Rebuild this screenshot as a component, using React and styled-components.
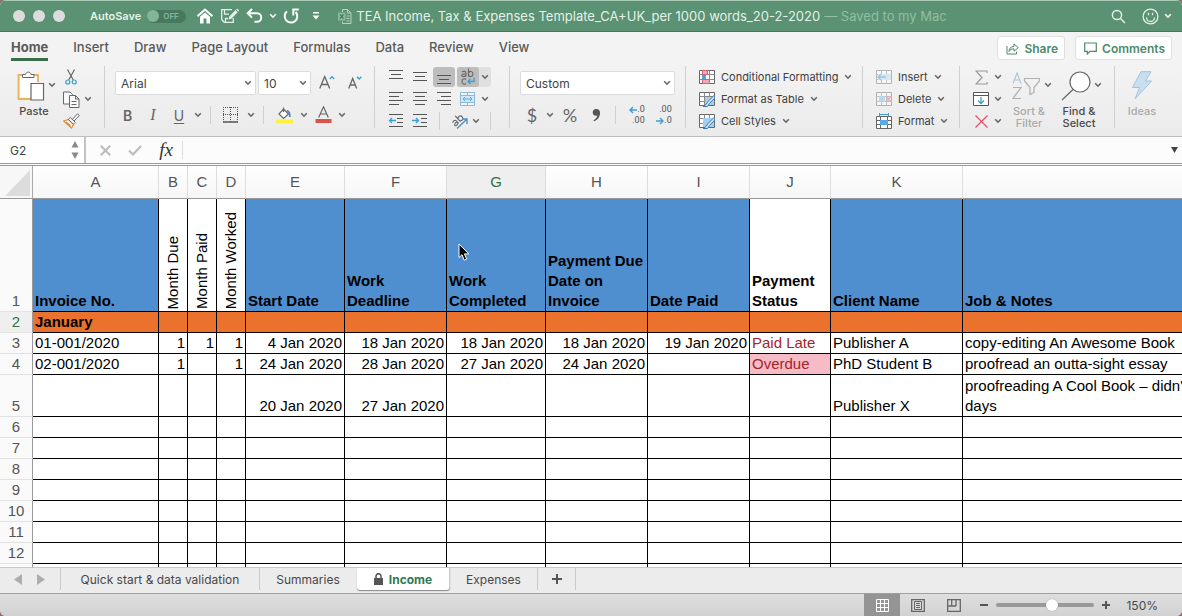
import styled, { createGlobalStyle, css } from "styled-components"

const GlobalStyle = createGlobalStyle`
*{box-sizing:border-box;}
body{
margin:0;
background-color:#8d6f70;
font-family:Inter,Roboto,"Liberation Sans",sans-serif;
color:#4a4a4a;
}
button,input,select{
font:inherit;
color:inherit;
margin:0;
}
svg{display:block;flex:none;}
`;

const menuTabs = ["Home", "Insert", "Draw", "Page Layout", "Formulas", "Data", "Review", "View"];

const columns = [
    {id:"A", width:126},
    {id:"B", width:29},
    {id:"C", width:29},
    {id:"D", width:29},
    {id:"E", width:99},
    {id:"F", width:102},
    {id:"G", width:99, active:true},
    {id:"H", width:102},
    {id:"I", width:102},
    {id:"J", width:81},
    {id:"K", width:132},
    {id:""},
];

const headings = [
    {text:"Invoice No."},
    {text:"Month Due", vertical:true},
    {text:"Month Paid", vertical:true},
    {text:"Month Worked", vertical:true},
    {text:"Start Date"},
    {text:"Work Deadline"},
    {text:"Work Completed"},
    {text:"Payment Due Date on Invoice"},
    {text:"Date Paid"},
    {text:"Payment Status", plain:true},
    {text:"Client Name"},
    {text:"Job & Notes"},
];

const invoices = [
    ["01-001/2020", "1", "1", "1", "4 Jan 2020", "18 Jan 2020", "18 Jan 2020", "18 Jan 2020", "19 Jan 2020", "Paid Late", "Publisher A", "copy-editing An Awesome Book"],
    ["02-001/2020", "1", "", "1", "24 Jan 2020", "28 Jan 2020", "27 Jan 2020", "24 Jan 2020", "", "Overdue", "PhD Student B", "proofread an outta-sight essay"],
    ["", "", "", "", "20 Jan 2020", "27 Jan 2020", "", "", "", "", "Publisher X", "proofreading A Cool Book – didn't\ndays"],
];

const emptyRows = ["6", "7", "8", "9", "10", "11", "12", ""];

function Chevron({color = "#666"}) {
    return (
        <svg width="8" height="6" viewBox="0 0 8 6" fill="none" stroke={color} strokeWidth="1.6">
            <path d="M1.2 1.2 4 4.2 6.8 1.2" />
        </svg>
    )
}

function Lines({rows}) {
    return (
        <svg width="16" height="14" viewBox="0 0 16 14" stroke="#555" strokeWidth="1">
            {rows.map(([x1, x2, y]) => <path key={y} d={`M${x1} ${y}.5H${x2}`} />)}
        </svg>
    )
}

function Indent({out}) {
    return (
        <svg width="16" height="14" viewBox="0 0 16 14" fill="none" stroke="#555">
            <path d="M1 .5H15M9 4.5H15M9 8.5H15M1 12.5H15" />
            <path stroke="#3b9fd6" strokeWidth="1.3" d={out ? "M8 6.5H1.5M4 4 1.5 6.5 4 9" : "M0 6.5H6.5M4 4 6.5 6.5 4 9"} />
        </svg>
    )
}

function TitleBar() {
    return (
        <Title>
            <Lights><Light /><Light /><Light /></Lights>
            <AutoSave>
                AutoSave
                <input type="checkbox" />
                <Toggle><i />OFF</Toggle>
            </AutoSave>
            <QuickTools>
                <BarButton aria-label="Home">
                    <svg width="18" height="16" viewBox="0 0 18 16" fill="none" stroke="#fff">
                        <path strokeWidth="2" d="M1.5 8.2 9 1.6 16.5 8.2" />
                        <path fill="#fff" stroke="none" d="M4 8.7 9 4.4l5 4.3V15.5h-3.5V10.5h-3V15.5H4z" />
                    </svg>
                </BarButton>
                <BarButton aria-label="Save">
                    <svg width="20" height="16" viewBox="0 0 20 16" fill="none" stroke="#e3f1e8" strokeWidth="1.3">
                        <path d="M12 1.7H1.7V11.5L4.2 14.3H13.3V10M4.5 1.7V6.2H9M5.5 14V10.5H8" />
                        <path fill="#e3f1e8" stroke="none" d="M8.5 11.5 9.3 8.6 15.5 2.1 17.7 4.2 11.4 10.7zM16.2 1.4 17.1.6 19.2 2.6 18.4 3.5z" />
                    </svg>
                </BarButton>
                <BarButton aria-label="Undo">
                    <svg width="17" height="16" viewBox="0 0 17 16" fill="none" stroke="#fff" strokeWidth="2">
                        <path d="M6 1 1.7 5.3 6 9.6M1.7 5.3H11a4.2 4.2 0 0 1 0 8.5H8.5" />
                    </svg>
                </BarButton>
                <Chevron color="#fff" />
                <BarButton aria-label="Redo">
                    <svg width="17" height="17" viewBox="0 0 17 17" fill="none" stroke="#fff" strokeWidth="2">
                        <path d="M4 3.4A6.3 6.3 0 1 0 12.6 4M15.8 1.6H10.3V7.5" />
                    </svg>
                </BarButton>
                <BarButton aria-label="Customize toolbar">
                    <svg width="8" height="9" viewBox="0 0 8 9" fill="#fff"><path d="M1 0H7V1.5H1zM.5 3.5H7.5L4 7.5z" /></svg>
                </BarButton>
            </QuickTools>
            <FileName>
                <svg width="14" height="15" viewBox="0 0 14 15" fill="none" stroke="#b6d4c2">
                    <path d="M4.500 3V.5H9.5L13 4V14.5H4.5V12.5M9.5.5V4H13M8.5 7H11.5M8.5 9.5H11.5M8.5 12H11.5" />
                    <path fill="#8bb89d" stroke="none" d="M0 3.5H7.5V11.5H0z" />
                    <path stroke="#417d5a" strokeWidth="1.3" d="M2 5.3 5.5 9.7M5.5 5.3 2 9.7" />
                </svg>
                <h1>TEA Income, Tax &amp; Expenses Template_CA+UK_per 1000 words_20-2-2020</h1>
                <span>— Saved to my Mac</span>
            </FileName>
            <TitleEnd>
                <BarButton aria-label="Search">
                    <svg width="15" height="15" viewBox="0 0 15 15" fill="none" stroke="#e3f1e8" strokeWidth="1.5">
                        <circle cx="6" cy="6" r="4.6" /><path d="M9.5 9.5 14 14" />
                    </svg>
                </BarButton>
                <BarButton aria-label="Feedback">
                    <svg width="17" height="17" viewBox="0 0 17 17" fill="none" stroke="#e3f1e8" strokeWidth="1.3">
                        <circle cx="8.5" cy="8.5" r="7.4" />
                        <path d="M4.500 9.5a4 4 0 0 0 8 0M6.5 4.7V7.3M10.5 4.7V7.3" />
                    </svg>
                    <Chevron color="#fff" />
                </BarButton>
            </TitleEnd>
        </Title>
    )
}

function MenuBar() {
    return (
        <Menu>
            <MenuTabs>
                {menuTabs.map(tab => <MenuTab key={tab} $active={tab === "Home"}>{tab}</MenuTab>)}
            </MenuTabs>
            <ActionButton>
                <svg width="13" height="13" viewBox="0 0 13 13" fill="none" stroke="#4b8b67">
                    <path d="M1 4V12H10.5V9.5M3 9.5C3.2 6 5 4.5 8 4.5V2L12.3 5.7 8 9.2V6.8C5.5 6.8 4.2 7.5 3 9.5z" />
                </svg>
                Share
            </ActionButton>
            <ActionButton>
                <svg width="13" height="13" viewBox="0 0 13 13" fill="none" stroke="#4b8b67" strokeWidth="1.2">
                    <path d="M.7 1H12.3V9.3H6L3.3 12V9.3H.7z" />
                </svg>
                Comments
            </ActionButton>
        </Menu>
    )
}

function ClipboardGroup() {
    return (
        <Group $width={104} $pad={12}>
            <BigButton $width={44}>
                <BigIcon>
                    <svg width="28" height="30" viewBox="0 0 28 30" fill="none" stroke="#666">
                        <path stroke="#e9b35c" strokeWidth="1.8" d="M5 4H1.5V28H14M17 4H21V11" />
                        <path fill="#fff" stroke="none" d="M3 5.5H19.5V12H13.5V26.5H3z" />
                        <path fill="#fff" d="M5.5 6.5V3.5H8.5C9 .3 13.5.3 14 3.5H17V6.5z" />
                        <path fill="#fff" strokeWidth="1.2" d="M14 12.5H26.5V29H14z" />
                    </svg>
                </BigIcon>
                Paste
            </BigButton>
            <BigChevron aria-label="Paste options" $pull={-12}><Chevron /></BigChevron>
            <Stack>
                <Tools>
                    <Tool aria-label="Cut">
                        <svg width="12" height="16" viewBox="0 0 12 16" fill="none" stroke="#666" strokeWidth="1.2">
                            <path d="M2.5.5 8.3 11M9.5.5 3.7 11" />
                            <g stroke="#3f9cc9"><circle cx="2.8" cy="13" r="2" /><circle cx="9.2" cy="13" r="2" /></g>
                        </svg>
                    </Tool>
                </Tools>
                <Tools>
                    <Tool aria-label="Copy">
                        <svg width="17" height="17" viewBox="0 0 17 17" fill="#fafafa" stroke="#666">
                            <path d="M.5 1H7L9.5 3.5V13H.5z" />
                            <path d="M6.5 4.5H12.5L16 8V16.5H6.5zM12.5 4.5V8H16M8.5 10.5H13.5M8.5 13.5H13.5" />
                        </svg>
                    </Tool>
                    <Arrow aria-label="Copy options"><Chevron /></Arrow>
                </Tools>
                <Tools>
                    <Tool aria-label="Format painter">
                        <svg width="17" height="16" viewBox="0 0 17 16" fill="#fff" stroke="#666">
                            <path stroke="#e08c3d" strokeWidth="1.2" d="M.7 8 5.5 6.5 10.5 11.5 8.5 15zM3 9 7.5 12.5" />
                            <path d="M5.3 6.3 7.2 4.5 12.3 9.3 10.5 11.2zM9.5 6.3 14.5.8 16.3 2.5 11 8z" />
                        </svg>
                    </Tool>
                </Tools>
            </Stack>
        </Group>
    )
}

function FontGroup() {
    return (
        <Group $width={269} $pad={10}>
            <TwoRows>
                <Tools $gap={2}>
                    <Picker $width={141}>
                        <select aria-label="Font"><option>Arial</option></select><Chevron />
                    </Picker>
                    <Picker $width={53}>
                        <select aria-label="Font size"><option>10</option></select><Chevron />
                    </Picker>
                    <Tool aria-label="Increase font size" $width={28}>
                        <svg width="16" height="16" viewBox="0 0 16 16" fill="none" stroke="#666" strokeWidth="1.3">
                            <path d="M.7 13.5 5.7 1.5 10.7 13.5M2.5 9.5H9" />
                            <path stroke="#3b9fc9" d="M10.8 4 13 1.7 15.2 4" />
                        </svg>
                    </Tool>
                    <Tool aria-label="Decrease font size" $width={24}>
                        <svg width="14" height="16" viewBox="0 0 14 16" fill="none" stroke="#666" strokeWidth="1.3">
                            <path d="M.7 13.5 4.7 3.5 8.700 13.5M2 10H7.5" />
                            <path stroke="#3b9fc9" d="M9 1.700 11.2 4 13.4 1.7" />
                        </svg>
                    </Tool>
                </Tools>
                <Tools>
                    <Letter $width={25} aria-label="Bold"><b>B</b></Letter>
                    <Letter $width={26} aria-label="Italic"><em>I</em></Letter>
                    <Letter $width={26} aria-label="Underline"><u>U</u></Letter>
                    <Arrow aria-label="Underline options"><Chevron /></Arrow>
                    <Divider $margin={6} />
                    <Tool aria-label="Borders" $width={28}>
                        <svg width="16" height="16" viewBox="0 0 16 16" stroke="#555">
                            <path strokeDasharray="1 1" d="M0 .5H15M.5 0V15M14.5 0V15M7.5 0V15M0 7.5H15" />
                            <path strokeWidth="1.5" d="M0 15H15" />
                        </svg>
                    </Tool>
                    <Arrow aria-label="Border options"><Chevron /></Arrow>
                    <Divider $margin={6} />
                    <Tool aria-label="Fill color" $width={28}>
                        <svg width="17" height="18" viewBox="0 0 17 18" fill="none" stroke="#666" strokeWidth="1.2">
                            <path fill="#fff" d="M7.5 3 12.5 8 7.5 12.5 3 8zM7.5 6V1.5" />
                            <path stroke="#4f83b8" strokeWidth="1.7" d="M11 4.5C14 5.5 14 8 13.8 11" />
                            <path stroke="#fdf13c" strokeWidth="4" d="M0 15.5H17" />
                        </svg>
                    </Tool>
                    <Arrow aria-label="Fill options"><Chevron /></Arrow>
                    <Tool aria-label="Font color" $width={26}>
                        <svg width="17" height="18" viewBox="0 0 17 18" fill="none" stroke="#666" strokeWidth="1.2">
                            <path d="M3.7 11.5 8.5.8 13.3 11.5M5.3 8H11.7" />
                            <path stroke="#d9534a" strokeWidth="4" d="M.5 15H16.5" />
                        </svg>
                    </Tool>
                    <Arrow aria-label="Font color options"><Chevron /></Arrow>
                </Tools>
            </TwoRows>
        </Group>
    )
}

function AlignGroup() {
    return (
        <Group $width={134} $pad={10}>
            <Stack>
                <Tools $gap={2}>
                    <Tool aria-label="Align top"><Lines rows={[[1, 15, 0], [3, 13, 4], [1, 15, 8]]} /></Tool>
                    <Tool aria-label="Align middle"><Lines rows={[[1, 15, 2], [3, 13, 6], [1, 15, 10]]} /></Tool>
                    <Tool aria-label="Align bottom" $on><Lines rows={[[1, 15, 5], [3, 13, 9], [1, 15, 13]]} /></Tool>
                    <Split>
                        <Tool aria-label="Wrap text" $on>
                            <svg width="16" height="18" viewBox="0 0 16 18" fill="none" stroke="#666" strokeWidth="1.1">
                                <path d="M2 4C3 3 6 3 6 5V8.5M6 6C1 5.5 1 8.5 3 8.5 4.5 8.5 6 8 6 7M8.5.5V8.5M8.5 5C9.5 2.5 13 3 13 6 13 9 9.5 9.5 8.5 7M6 11.5C4.5 10 2 11 2 13.5 2 16 4.5 17 6 15.5" />
                                <path stroke="#3b9fd6" strokeWidth="1.4" d="M14 9.5V13.5H8M10.5 11 8 13.5 10.5 16" />
                            </svg>
                        </Tool>
                        <Arrow aria-label="Wrap options"><Chevron /></Arrow>
                    </Split>
                </Tools>
                <Tools $gap={2}>
                    <Tool aria-label="Align left"><Lines rows={[[1, 15, 0], [1, 11, 4], [1, 15, 8], [1, 11, 12]]} /></Tool>
                    <Tool aria-label="Align center"><Lines rows={[[1, 15, 0], [3, 13, 4], [1, 15, 8], [3, 13, 12]]} /></Tool>
                    <Tool aria-label="Align right"><Lines rows={[[1, 15, 0], [5, 15, 4], [1, 15, 8], [5, 15, 12]]} /></Tool>
                    <Tools>
                        <Tool aria-label="Merge cells">
                            <svg width="16" height="16" viewBox="0 0 16 16" fill="none" stroke="#8bb9d6">
                                <path fill="#eef6fb" d="M.5 1.5H14.5V14.5H.5zM7.5 1.5V4.5M7.5 11.5V14.5" />
                                <path fill="#d3e8f6" d="M.5 4.5H14.5V11.5H.5z" />
                                <path stroke="#5aa6d6" d="M3 8H12M5 6 3 8 5 10M10 6 12 8 10 10" />
                            </svg>
                        </Tool>
                        <Arrow aria-label="Merge options"><Chevron /></Arrow>
                    </Tools>
                </Tools>
                <Tools $gap={2}>
                    <Tool aria-label="Decrease indent"><Indent out /></Tool>
                    <Tool aria-label="Increase indent"><Indent /></Tool>
                    <Divider $margin={6} />
                    <Tools>
                        <Tool aria-label="Orientation">
                            <svg width="18" height="16" viewBox="0 0 18 16" fill="none" stroke="#666" strokeWidth="1.1">
                                <g transform="translate(2 9) rotate(-42)">
                                    <path d="M0 1C1 0 4 0 4 2V5.5M4 3C-1 2.5-1 5.5 1 5.5 2.5 5.5 4 5 4 4M6.5-2.5V5.5M6.5 2C7.5-.5 11 0 11 3 11 6 7.5 6 6.5 4" />
                                </g>
                                <path stroke="#4f8fc0" strokeWidth="1.4" d="M7 15.5 16.5 6.5M12 6H17V11" />
                            </svg>
                        </Tool>
                        <Arrow aria-label="Orientation options"><Chevron /></Arrow>
                    </Tools>
                    <Divider $margin={6} />
                </Tools>
            </Stack>
        </Group>
    )
}

function NumberGroup() {
    return (
        <Group $width={175} $pad={10}>
            <TwoRows>
                <Tools>
                    <Picker $width={155}>
                        <select aria-label="Number format"><option>Custom</option></select><Chevron />
                    </Picker>
                </Tools>
                <Tools>
                    <Letter $width={24} $size={18} aria-label="Currency">$</Letter>
                    <Arrow aria-label="Currency options"><Chevron /></Arrow>
                    <Letter $width={28} $size={18} aria-label="Percent">%</Letter>
                    <Tool aria-label="Comma style" $width={24}>
                        <svg width="9" height="14" viewBox="0 0 9 14" fill="#555">
                            <path d="M4 1A3.5 3.5 0 0 1 8 5C8 9 5.5 12 2 13.2L1.5 12.3C4 11 5.2 9.5 5.3 7.6 3 8.5.7 7 .7 4.5.7 2.5 2.2 1 4 1z" />
                        </svg>
                    </Tool>
                    <Divider $margin={7} />
                    <Tool aria-label="Increase decimal" $width={28}>
                        <Decimal>
                            <span><svg width="8" height="8" viewBox="0 0 8 8" fill="none" stroke="#3b9fd6" strokeWidth="1.4"><path d="M8 4H1M4 1 1 4 4 7" /></svg>.0</span>
                            <span>.00</span>
                        </Decimal>
                    </Tool>
                    <Tool aria-label="Decrease decimal" $width={26}>
                        <Decimal>
                            <span>.00</span>
                            <span><svg width="8" height="8" viewBox="0 0 8 8" fill="none" stroke="#3b9fd6" strokeWidth="1.4"><path d="M0 4H7M4 1 7 4 4 7" /></svg>.0</span>
                        </Decimal>
                    </Tool>
                </Tools>
            </TwoRows>
        </Group>
    )
}

function GridBase({children, faded}) {
    return (
        <svg width="16" height="16" viewBox="0 0 16 16" fill="none" stroke="#666" opacity={faded ? 0.45 : 1}>
            <path fill="#fff" d="M.5 1.5H15.5V14.5H.5z" />
            <path stroke="#888" d="M5.5 1.5V14.5M10.5 1.5V14.5M.5 5.5H15.5M.5 10.5H15.5" />
            {children}
        </svg>
    )
}

function StylesGroup() {
    return (
        <Group $width={176} $pad={13}>
            <Stack>
                <TextTool>
                    <GridBase>
                        <path stroke="#d9607a" fill="#f3a5b3" d="M3.5 1.5H8.5V5.5H3.5zM3.5 10.5H10.5V14.5H3.5z" />
                        <path stroke="none" fill="#4fa3d8" d="M3 6H7V10H3z" />
                    </GridBase>
                    Conditional Formatting <Chevron />
                </TextTool>
                <TextTool>
                    <GridBase>
                        <path stroke="none" fill="#a3d0f2" d="M6 6H15V14H6z" />
                        <path stroke="#3f7bb0" fill="#cfe4f5" d="M15.5 4 9 10.5 7 13.5 4 15.5H8.5L10.5 12.5 15.8 7z" />
                    </GridBase>
                    Format as Table <Chevron />
                </TextTool>
                <TextTool>
                    <GridBase>
                        <path stroke="none" fill="#a3d0f2" d="M4 5H15V14H4z" />
                        <path stroke="#3f7bb0" fill="#cfe4f5" d="M15.5 4 9 10.5 7 13.5 4 15.5H8.5L10.5 12.5 15.8 7z" />
                    </GridBase>
                    Cell Styles <Chevron />
                </TextTool>
            </Stack>
        </Group>
    )
}

function CellsGroup() {
    return (
        <Group $width={96} $pad={13}>
            <Stack>
                <TextTool>
                    <GridBase faded>
                        <path stroke="none" fill="#b9dcf4" d="M2 5H15V11H2z" />
                        <path stroke="#2f8fd0" strokeWidth="1.4" d="M10 8H2M5 5 2 8 5 11" />
                    </GridBase>
                    Insert <Chevron />
                </TextTool>
                <TextTool>
                    <GridBase faded>
                        <path stroke="none" fill="#79bde8" d="M3 5H9V11H3z" />
                        <path stroke="#e0607a" strokeWidth="1.5" d="M10 5 15 11M15 5 10 11" />
                    </GridBase>
                    Delete <Chevron />
                </TextTool>
                <TextTool>
                    <svg width="16" height="17" viewBox="0 0 16 17" fill="none" stroke="#666">
                        <path fill="#fff" d="M.5 3.5H15.5V15.5H.5zM4.5 3.5V15.5M11.5 3.5V15.5M.5 7.5H15.5M.5 11.5H15.5" />
                        <path stroke="none" fill="#58abe6" d="M4 7H12V12H4z" />
                        <path stroke="#3b9fd6" d="M3.5 0V3M12.5 0V3M3.5 1.5H12.5" />
                    </svg>
                    Format <Chevron />
                </TextTool>
            </Stack>
        </Group>
    )
}

function EditingGroup() {
    return (
        <Group $width={154} $pad={10}>
            <Stack>
                <Tools>
                    <Tool aria-label="AutoSum">
                        <svg width="13" height="15" viewBox="0 0 13 15" fill="none" stroke="#999" strokeWidth="1.2">
                            <path d="M12 3V1H1L7 7.5 1 14H12V12" />
                        </svg>
                    </Tool>
                    <Arrow aria-label="AutoSum options"><Chevron /></Arrow>
                </Tools>
                <Tools>
                    <Tool aria-label="Fill">
                        <svg width="16" height="14" viewBox="0 0 16 14" fill="#fff" stroke="#555">
                            <path d="M.5.5H15.5V13.5H.5zM.5 3.5H15.5" />
                            <path fill="none" stroke="#3b9fd6" strokeWidth="1.3" d="M8 5V11.5M5 8.5 8 11.5 11 8.5" />
                        </svg>
                    </Tool>
                    <Arrow aria-label="Fill series options"><Chevron /></Arrow>
                </Tools>
                <Tools>
                    <Tool aria-label="Clear">
                        <svg width="13" height="13" viewBox="0 0 13 13" stroke="#e0506c" strokeWidth="1.2">
                            <path d="M.5.5 12.5 12.5M12.5.5.5 12.5" />
                        </svg>
                    </Tool>
                    <Arrow aria-label="Clear options"><Chevron /></Arrow>
                </Tools>
            </Stack>
            <BigButton $width={50} $muted>
                <BigIcon>
                    <svg width="28" height="28" viewBox="0 0 28 28" fill="none" strokeWidth="1.2">
                        <path stroke="#a9c8dd" d="M1 11.5 5 1 9 11.5M2.5 8H7.5" />
                        <path stroke="#b0b0b0" d="M1 15.5H9L1 26.5H9M12.5 6.5H27.5V9L22 15.5V20.5L18 22.5V15.5L12.5 9z" />
                    </svg>
                </BigIcon>
                Sort &amp;<br />Filter
            </BigButton>
            <BigChevron aria-label="Sort options" $pull={-14}><Chevron /></BigChevron>
            <BigButton $width={50} $pull={-2}>
                <BigIcon>
                    <svg width="30" height="30" viewBox="0 0 30 30" fill="none" stroke="#666" strokeWidth="1.2">
                        <circle cx="19" cy="11" r="10" fill="#fff" /><path d="M12 18.5 1 29" />
                    </svg>
                </BigIcon>
                Find &amp;<br />Select
            </BigButton>
            <BigChevron aria-label="Find options" $pull={-14}><Chevron /></BigChevron>
        </Group>
    )
}

function Ribbon() {
    return (
        <RibbonBar>
            <ClipboardGroup />
            <GroupLine />
            <FontGroup />
            <GroupLine />
            <AlignGroup />
            <GroupLine />
            <NumberGroup />
            <GroupLine />
            <StylesGroup />
            <GroupLine />
            <CellsGroup />
            <GroupLine />
            <EditingGroup />
            <GroupLine />
            <BigButton $width={54} $muted>
                <BigIcon $center>
                    <svg width="22" height="29" viewBox="0 0 22 29" fill="#c9dff0" stroke="#a3c3dd">
                        <path d="M10 .7H20L14.5 10H20.5L4 28 8.5 16.5H1.5z" />
                    </svg>
                </BigIcon>
                Ideas
            </BigButton>
        </RibbonBar>
    )
}

function FormulaBar() {
    return (
        <Formula>
            <NameBox>
                <input aria-label="Name box" defaultValue="G2" />
                <svg width="8" height="18" viewBox="0 0 8 18" fill="#8a8a8a"><path d="M4 0 7.5 6.5H.5zM4 18 .5 11.5H7.5z" /></svg>
            </NameBox>
            <FormulaTools>
                <Tool aria-label="Cancel">
                    <svg width="11" height="11" viewBox="0 0 11 11" stroke="#bbb" strokeWidth="2"><path d="M.8.8 10.2 10.2M10.2.8.8 10.2" /></svg>
                </Tool>
                <Tool aria-label="Enter">
                    <svg width="14" height="11" viewBox="0 0 14 11" fill="none" stroke="#bbb" strokeWidth="2"><path d="M1 5.5 5 9.5 13 1" /></svg>
                </Tool>
                <Fx aria-label="Insert function">fx</Fx>
            </FormulaTools>
            <FormulaInput aria-label="Formula" />
            <Tool aria-label="Expand formula bar" $width={16}>
                <svg width="7" height="6" viewBox="0 0 7 6" fill="#444"><path d="M0 0H7L3.5 6z" /></svg>
            </Tool>
        </Formula>
    )
}

function cellKind(row, col) {
    if (col > 0 && col < 9) return "right";
    if (col === 9) return row === 1 ? "overdue" : "late";
    return "left";
}

function Sheet() {
    return (
        <SheetArea>
            <Grid>
                <colgroup>
                    <col style={{width: 33}} />
                    {columns.map(c => <col key={c.id} style={{width: c.width}} />)}
                </colgroup>
                <thead>
                    <tr>
                        <Corner aria-label="Select all">
                            <svg width="25" height="26" viewBox="0 0 25 26" fill="#dcdcdc"><path d="M25 0V26H0z" /></svg>
                        </Corner>
                        {columns.map(c => <ColHead key={c.id} scope="col" $active={c.active}>{c.id}</ColHead>)}
                    </tr>
                </thead>
                <tbody>
                    <Row $height={113}>
                        <RowHead scope="row">1</RowHead>
                        {headings.map(h => (
                            <HeadCell key={h.text} $plain={h.plain || h.vertical} $vertical={h.vertical}>
                                {h.vertical ? <Upright>{h.text}</Upright> : h.text}
                            </HeadCell>
                        ))}
                    </Row>
                    <Row $height={21}>
                        <RowHead scope="row" $active>2</RowHead>
                        {columns.map((c, i) => <MonthCell key={c.id}>{i === 0 ? "January" : null}</MonthCell>)}
                    </Row>
                    {invoices.map((invoice, r) => (
                        <Row key={r} $height={r === 2 ? 42 : 21}>
                            <RowHead scope="row">{r + 3}</RowHead>
                            {invoice.map((text, i) => <Cell key={i} $kind={text ? cellKind(r, i) : "left"}>{text}</Cell>)}
                        </Row>
                    ))}
                    {emptyRows.map(n => (
                        <Row key={n} $height={21}>
                            <RowHead scope="row">{n}</RowHead>
                            {columns.map(c => <Cell key={c.id} />)}
                        </Row>
                    ))}
                </tbody>
            </Grid>
            <Pointer width="12" height="19" viewBox="0 0 12 19">
                <path fill="#000" stroke="#fff" d="M1 1V14.5L4 11.7 6.2 17.2 8.7 16.1 6.4 10.9H10.8z" />
            </Pointer>
        </SheetArea>
    )
}

function SheetTabs() {
    return (
        <TabStrip>
            <TabNav>
                <Tool aria-label="Previous sheet"><svg width="8" height="11" viewBox="0 0 8 11" fill="#adadad"><path d="M8 0V11L0 5.5z" /></svg></Tool>
                <Tool aria-label="Next sheet"><svg width="8" height="11" viewBox="0 0 8 11" fill="#adadad"><path d="M0 0V11L8 5.5z" /></svg></Tool>
            </TabNav>
            <SheetTab $width={199}>Quick start &amp; data validation</SheetTab>
            <SheetTab $width={97} $noline>Summaries</SheetTab>
            <SheetTab $width={93} $active>
                <svg width="9" height="12" viewBox="0 0 9 12" fill="#555">
                    <path d="M0 5H9V12H0z" /><path fill="none" stroke="#555" strokeWidth="1.5" d="M2 5V3.2a2.5 2.5 0 0 1 5 0V5" />
                </svg>
                Income
            </SheetTab>
            <SheetTab $width={88}>Expenses</SheetTab>
            <SheetTab $width={38} aria-label="New sheet">
                <svg width="10" height="10" viewBox="0 0 10 10" stroke="#555" strokeWidth="2"><path d="M5 0V10M0 5H10" /></svg>
            </SheetTab>
        </TabStrip>
    )
}

function StatusBar() {
    return (
        <Status>
            <ViewButton aria-label="Normal view" $active>
                <svg width="13" height="13" viewBox="0 0 13 13" fill="none" stroke="#fff">
                    <path d="M.5.5H12.5V12.5H.5zM4.5 0V13M8.5 0V13M0 4.5H13M0 8.5H13" />
                </svg>
            </ViewButton>
            <ViewButton aria-label="Page layout view">
                <svg width="14" height="13" viewBox="0 0 14 13" fill="none" stroke="#666">
                    <path strokeWidth="1.3" d="M.7.7H13.3V12.3H.7z" /><path d="M3.5 2.5H10.5V10.5H3.5zM5 4.5H9M5 6.5H9M5 8.5H9" />
                </svg>
            </ViewButton>
            <ViewButton aria-label="Page break view">
                <svg width="14" height="13" viewBox="0 0 14 13" fill="none" stroke="#666" strokeWidth="1.3">
                    <path d="M.7.7H13.3V12.3H.7zM4.7.7V7M9 .7V7M.7 7H9" />
                </svg>
            </ViewButton>
            <Zoom>
                <ZoomButton aria-label="Zoom out"><svg width="8" height="2" viewBox="0 0 8 2" fill="#555"><path d="M0 0H8V2H0z" /></svg></ZoomButton>
                <Slider type="range" aria-label="Zoom" min="0" max="100" defaultValue="58" />
                <ZoomButton aria-label="Zoom in"><svg width="8" height="8" viewBox="0 0 8 8" stroke="#555" strokeWidth="2"><path d="M4 0V8M0 4H8" /></svg></ZoomButton>
                <ZoomValue>150%</ZoomValue>
            </Zoom>
        </Status>
    )
}

function App() {
    return (
        <Window>
            <GlobalStyle />
            <TitleBar />
            <MenuBar />
            <Ribbon />
            <FormulaBar />
            <Sheet />
            <SheetTabs />
            <StatusBar />
        </Window>
    )
}

export default App

const Window=styled.div`
display:flex;
flex-direction:column;
height:100vh;
border-radius:6px;
overflow:hidden;
background-color:#f3f3f3;
`;
const bare=css`
display:flex;
align-items:center;
justify-content:center;
flex:none;
padding:0;
border:0;
background:none;
`;

const Title=styled.header`
display:flex;
align-items:center;
flex:none;
height:32px;
padding:0 10px 0 13px;
background-color:#5a9273;
border-top:1px solid #a9cbb6;
border-bottom:1px solid #3f7b59;
color:#e3f1e8;
`;
const Lights=styled.div`
display:flex;
gap:8px;
`;
const Light=styled.span`
width:12px;
height:12px;
border-radius:50%;
background-color:#dcdcdc;
`;
const AutoSave=styled.label`
display:flex;
align-items:center;
gap:6px;
position:relative;
margin-left:25px;
font-size:11px;
font-weight:600;
input{
position:absolute;
right:0;
width:39px;
height:13px;
opacity:0;
}
`;
const Toggle=styled.span`
display:flex;
align-items:center;
gap:4px;
width:39px;
height:13px;
border-radius:7px;
background-color:#48795e;
color:#86b398;
font-size:8px;
i{
width:12px;
height:12px;
border-radius:50%;
background-color:#83b696;
}
`;
const QuickTools=styled.div`
display:flex;
align-items:center;
gap:6px;
margin-left:10px;
`;
const BarButton=styled.button`
${bare}
gap:5px;
height:20px;
&:nth-child(6){margin-left:6px;}
`;
const FileName=styled.div`
display:flex;
align-items:center;
flex:1;
min-width:0;
gap:4px;
margin-left:18px;
font-size:13px;
white-space:nowrap;
h1{
margin:0;
font-size:13px;
font-weight:400;
}
span{color:#94bfa5;}
`;
const TitleEnd=styled.div`
display:flex;
gap:16px;
`;

const Menu=styled.nav`
display:flex;
align-items:center;
flex:none;
gap:10px;
height:32px;
padding:0 10px 0 11px;
`;
const MenuTabs=styled.div`
display:flex;
flex:1;
gap:25px;
`;
const MenuTab=styled.button`
${bare}
height:26px;
font-size:13px;
font-weight:${p => p.$active ? 700 : 500};
color:#5a5a5a;
border-bottom:3px solid ${p => p.$active ? "#3a6e4c" : "transparent"};
`;
const ActionButton=styled.button`
${bare}
gap:5px;
height:24px;
padding:0 6px 0 8px;
border:1px solid #e0e0e0;
border-radius:3px;
background-color:#fff;
color:#4b8b67;
font-size:12px;
font-weight:600;
`;

const RibbonBar=styled.section`
display:flex;
flex:none;
height:72px;
padding-top:2px;
background:linear-gradient(#f3f3f3,#ebebeb);
`;
const Group=styled.div`
display:flex;
flex:none;
width:${p => p.$width}px;
padding-left:${p => p.$pad}px;
`;
const GroupLine=styled.span`
flex:none;
width:1px;
height:62px;
background-color:#cfcfcf;
`;
const Stack=styled.div`
display:flex;
flex-direction:column;
flex:none;
>*{height:22px;}
`;
const TwoRows=styled.div`
display:flex;
flex-direction:column;
gap:8px;
padding-top:5px;
>*{height:24px;}
`;
const Tools=styled.div`
display:flex;
align-items:center;
gap:${p => p.$gap || 0}px;
`;
const Tool=styled.button`
${bare}
width:${p => p.$width || 22}px;
height:20px;
border-radius:3px;
background-color:${p => p.$on ? "#bdbdbd" : "transparent"};
`;
const Arrow=styled.button`
${bare}
width:12px;
height:20px;
`;
const Split=styled.div`
display:flex;
border-radius:3px;
background-color:#e0e0e0;
`;
const Letter=styled.button`
${bare}
width:${p => p.$width}px;
height:22px;
font-size:${p => p.$size || 14}px;
font-family:${p => p.$size ? "Lato,Inter,sans-serif" : "inherit"};
color:#666;
b{font-weight:600;}
em{font-family:"Liberation Serif",serif;font-size:16px;}
u{text-underline-offset:2px;}
`;
const Divider=styled.span`
width:1px;
height:18px;
margin:0 ${p => p.$margin}px;
background-color:#cfcfcf;
`;
const Picker=styled.div`
position:relative;
width:${p => p.$width}px;
height:24px;
select{
appearance:none;
width:100%;
height:100%;
padding:0 18px 0 5px;
border:1px solid #dcdcdc;
border-radius:2px;
background-color:#fff;
font-size:12px;
color:#444;
}
svg{
position:absolute;
right:4px;
top:9px;
pointer-events:none;
}
`;
const Decimal=styled.span`
display:flex;
flex-direction:column;
align-items:flex-end;
font-family:Roboto,sans-serif;
font-size:9px;
line-height:11px;
color:#555;
span{display:flex;align-items:center;}
`;
const TextTool=styled.button`
${bare}
justify-content:flex-start;
gap:6px;
font-size:11px;
white-space:nowrap;
color:#404040;
`;
const BigButton=styled.button`
${bare}
flex-direction:column;
justify-content:flex-start;
width:${p => p.$width}px;
height:66px;
margin-left:${p => p.$pull || 0}px;
font-size:11px;
line-height:12px;
font-weight:500;
color:${p => p.$muted ? "#aaa" : "#4a4a4a"};
`;
const BigIcon=styled.span`
display:flex;
align-items:center;
height:39px;
padding-right:${p => p.$center ? 0 : 6}px;
`;
const BigChevron=styled.button`
${bare}
width:16px;
height:38px;
margin-left:${p => p.$pull}px;
`;

const Formula=styled.section`
display:flex;
align-items:center;
flex:none;
height:30px;
background-color:#fcfcfc;
border-top:1px solid #bdbdbd;
border-bottom:3px double #999;
`;
const NameBox=styled.div`
display:flex;
align-items:center;
height:100%;
width:86px;
padding:0 5px 0 10px;
background-color:#fff;
border-right:2px solid #c4c4c4;
input{
flex:1;
min-width:0;
padding:0;
border:0;
background:none;
font-size:12px;
color:#444;
}
`;
const FormulaTools=styled.div`
display:flex;
align-items:center;
gap:8px;
height:18px;
padding:0 4px 0 8px;
border-right:1px solid #ddd;
`;
const Fx=styled.button`
${bare}
width:24px;
font-family:"Liberation Serif",serif;
font-style:italic;
font-size:19px;
color:#333;
`;
const FormulaInput=styled.input`
flex:1;
min-width:0;
border:0;
background:none;
`;

const SheetArea=styled.main`
position:relative;
flex:1;
min-height:0;
overflow:hidden;
background-color:#fff;
`;
const Grid=styled.table`
width:100%;
table-layout:fixed;
border-collapse:separate;
border-spacing:0;
font-family:"Liberation Sans",Arial,sans-serif;
font-size:15px;
line-height:20px;
color:#000;
`;
const Corner=styled.th`
padding:0 0 2px 5px;
vertical-align:bottom;
background-color:#f7f7f7;
border-right:1px solid #aaa;
border-bottom:1px solid #999;
`;
const ColHead=styled.th`
height:33px;
padding:0;
font-weight:400;
color:${p => p.$active ? "#2f7148" : "#555"};
background:${p => p.$active ? "#efefef" : "linear-gradient(#fff,#f6f6f6)"};
border-right:1px solid #ddd;
border-bottom:1px solid #999;
&:last-child{border-right:0;}
`;
const Row=styled.tr`
height:${p => p.$height}px;
`;
const RowHead=styled.th`
padding:0;
vertical-align:bottom;
font-weight:400;
color:${p => p.$active ? "#2f7148" : "#555"};
background-color:${p => p.$active ? "#efefef" : "#fafafa"};
border-right:1px solid #999;
border-bottom:1px solid #e2e2e2;
`;
const Cell=styled.td`
padding:0 2px;
vertical-align:bottom;
white-space:pre;
overflow:hidden;
border-right:1px solid #000;
border-bottom:1px solid #000;
text-align:${p => p.$kind === "right" ? "right" : "left"};
color:${p => p.$kind === "late" || p.$kind === "overdue" ? "#a3242b" : "#000"};
background-color:${p => p.$kind === "overdue" ? "#f5bcc7" : "#fff"};
&:last-child{border-right:0;}
`;
const HeadCell=styled(Cell)`
padding:${p => p.$vertical ? "0 0 2px" : "0 2px"};
white-space:normal;
font-weight:${p => p.$vertical ? 400 : 700};
background-color:${p => p.$plain ? "#fff" : "#508fcf"};
`;
const MonthCell=styled(Cell)`
font-weight:700;
background-color:#ea722c;
`;
const Upright=styled.span`
display:block;
margin:0 auto;
width:20px;
writing-mode:vertical-rl;
transform:rotate(180deg);
white-space:nowrap;
`;
const Pointer=styled.svg`
position:absolute;
left:458px;
top:77px;
`;

const TabStrip=styled.nav`
display:flex;
align-items:flex-start;
flex:none;
height:27px;
background-color:#ececec;
border-top:1px solid #c9c9c9;
border-bottom:1px solid #a0a0a0;
`;
const TabNav=styled.div`
display:flex;
align-items:center;
gap:1px;
width:61px;
height:22px;
padding-left:7px;
border-right:1px solid #c9c9c9;
`;
const SheetTab=styled.button`
${bare}
gap:6px;
width:${p => p.$width}px;
height:22px;
font-size:${p => p.$active ? 12 : 12}px;
font-weight:${p => p.$active ? 700 : 400};
color:${p => p.$active ? "#2f7a50" : "#484848"};
background-color:${p => p.$active ? "#fff" : "transparent"};
border-right:1px solid ${p => p.$noline ? "transparent" : "#c9c9c9"};
${p => p.$active && css`
border-radius:0 0 3px 3px;
box-shadow:0 1px 1px #888;
`}
`;

const Status=styled.footer`
display:flex;
align-items:center;
justify-content:flex-end;
flex:none;
height:22px;
padding-right:24px;
background:linear-gradient(#dedede,#d2d2d2);
`;
const ViewButton=styled.button`
${bare}
width:36px;
height:22px;
background-color:${p => p.$active ? "#949494" : "transparent"};
`;
const Zoom=styled.div`
display:flex;
align-items:center;
margin-left:4px;
`;
const ZoomButton=styled.button`
${bare}
width:16px;
height:18px;
`;
const Slider=styled.input`
appearance:none;
width:98px;
height:4px;
margin:0 4px;
border-radius:2px;
background-color:#999;
&::-webkit-slider-thumb{
appearance:none;
width:12px;
height:12px;
border-radius:50%;
background-color:#fff;
box-shadow:0 0 1px #777;
}
`;
const ZoomValue=styled.span`
width:44px;
text-align:right;
font-size:12px;
`;
